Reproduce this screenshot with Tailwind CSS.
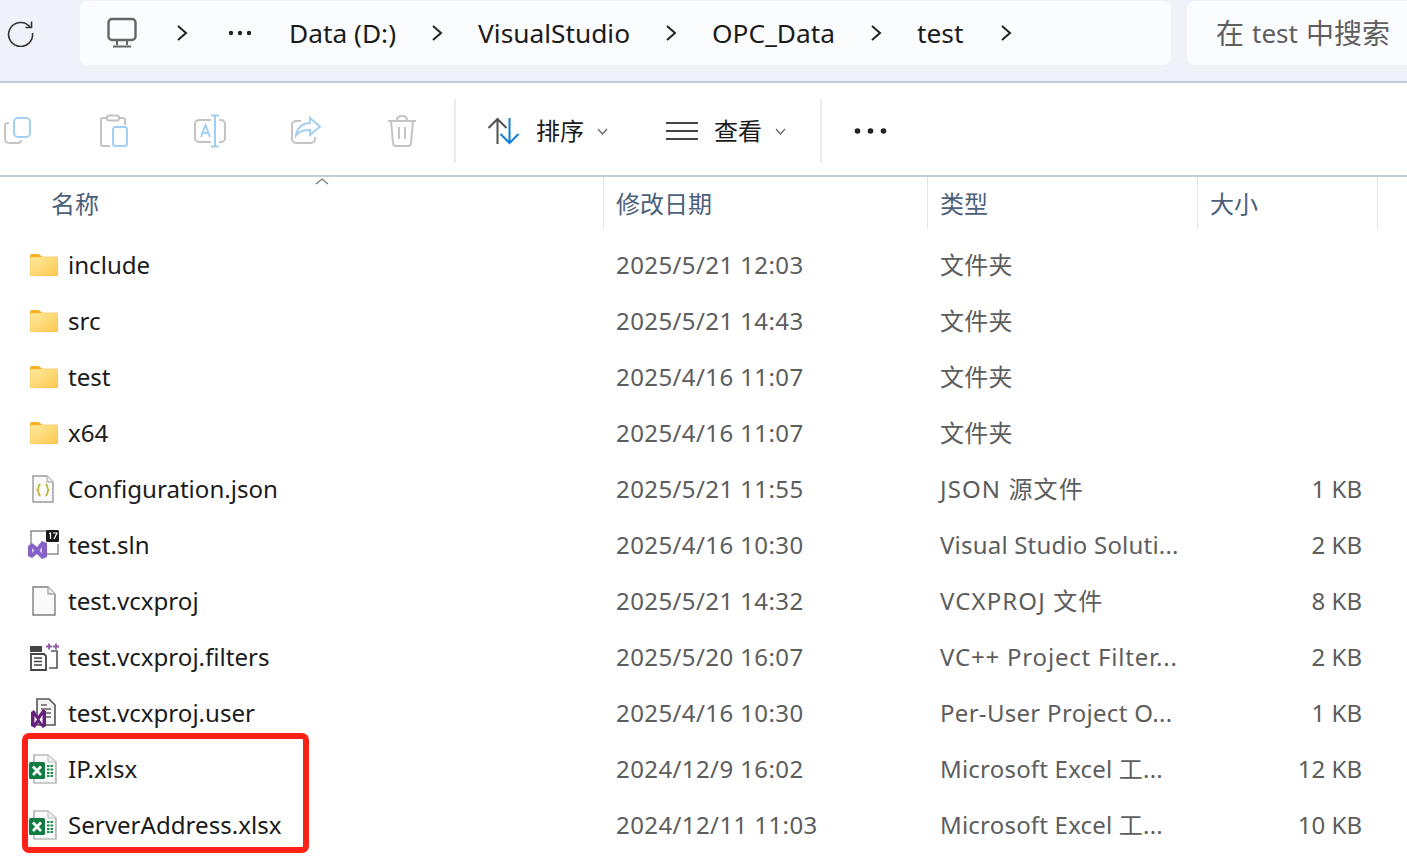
<!DOCTYPE html>
<html lang="zh-CN">
<head>
  <meta charset="UTF-8" />
  <meta name="viewport" content="width=device-width, initial-scale=1.0"/>
  <title>test</title>
  <script src="https://cdn.jsdelivr.net/npm/@tailwindcss/browser@4"></script>
</head>
<body class="bg-white overflow-hidden font-['Noto_Sans','Noto_Sans_CJK_SC',sans-serif] text-[24px] text-[#1b1b1b]">
<div class="relative w-[1407px] h-[867px] overflow-hidden">

  <!-- Address bar -->
  <div class="flex h-[83px] bg-[#eff3f9] border-b-2 border-[#c0cddb] pt-px text-[26.3px]">
    <div class="w-[80px] h-[64px] flex items-center pl-[7px] shrink-0">
      <svg width="28" height="28" viewBox="0 0 28 28" fill="none" stroke="#333" stroke-width="1.6"><path d="M23 8A12 12 0 1 0 25.500 14"/><path d="M24.500 2.500V8.500H18.500"/></svg>
    </div>
    <div class="w-[1091px] h-[64px] bg-[#fbfcfe] rounded-lg flex items-center pl-[27px] gap-[35px] shrink-0">
      <svg class="mr-[4px]" width="30" height="32" viewBox="0 0 30 32" fill="none" stroke="#666" stroke-width="2.400"><rect x="1.500" y="2" width="27" height="21" rx="3.500"/><path d="M10 24V28M20 24V28M6 29.500H24" stroke-width="2"/></svg>
      <svg class="mr-[5px]" width="12" height="18" viewBox="0 0 12 18" fill="none" stroke="#222" stroke-width="2"><path d="M2 2L10 9L2 16"/></svg>
      <svg class="mr-[2px]" width="24" height="6" viewBox="0 0 24 6" fill="#222"><circle cx="3" cy="3" r="2.200"/><circle cx="12" cy="3" r="2.200"/><circle cx="21" cy="3" r="2.200"/></svg>
      <span class="leading-none">Data (D:)</span>
      <svg width="12" height="18" viewBox="0 0 12 18" fill="none" stroke="#222" stroke-width="2"><path d="M2 2L10 9L2 16"/></svg>
      <span class="leading-none">VisualStudio</span>
      <svg width="12" height="18" viewBox="0 0 12 18" fill="none" stroke="#222" stroke-width="2"><path d="M2 2L10 9L2 16"/></svg>
      <span class="leading-none">OPC_Data</span>
      <svg width="12" height="18" viewBox="0 0 12 18" fill="none" stroke="#222" stroke-width="2"><path d="M2 2L10 9L2 16"/></svg>
      <span class="leading-none">test</span>
      <svg class="ml-[2px]" width="12" height="18" viewBox="0 0 12 18" fill="none" stroke="#222" stroke-width="2"><path d="M2 2L10 9L2 16"/></svg>
    </div>
    <div class="ml-4 w-[240px] h-[64px] bg-[#fbfcfe] rounded-l-lg flex items-center pl-[29px] text-[#5f5f5f] text-[28px] whitespace-nowrap shrink-0">在 <span class="text-[26px] mx-[8px]">test</span> 中搜索</div>
  </div>

  <!-- Command bar -->
  <div class="flex items-center h-[94px] border-b-2 border-[#c0cddb] pt-1">
    <div class="flex w-[454px] shrink-0 h-[64px] items-center">
      <div class="w-[36px] flex justify-center">
        <svg width="30" height="30" viewBox="0 0 30 30" fill="none" stroke-width="2"><path d="M6 7H5a3 3 0 0 0-3 3V23a4 4 0 0 0 4 4H15a3 3 0 0 0 3-3" stroke="#c4c4c4"/><rect x="11" y="2" width="16" height="19" rx="4" stroke="#a3cff3"/></svg>
      </div>
      <div class="w-[60px]"></div>
      <div class="w-[36px] flex justify-center">
        <svg width="30" height="34" viewBox="0 0 30 34" fill="none" stroke-width="2"><path d="M11 32H4a2 2 0 0 1-2-2V6a2 2 0 0 1 2-2H8M20 4H24a2 2 0 0 1 2 2V11" stroke="#c4c4c4"/><rect x="8" y="1.500" width="12" height="5" rx="2" stroke="#c4c4c4"/><rect x="14" y="13" width="14" height="19" rx="2.500" stroke="#a3cff3"/></svg>
      </div>
      <div class="w-[60px]"></div>
      <div class="w-[36px] flex justify-center">
        <svg width="34" height="34" viewBox="0 0 34 34" fill="none" stroke-width="2"><path d="M18 6H6a4 4 0 0 0-4 4V24a4 4 0 0 0 4 4H18M26 6H28a4 4 0 0 1 4 4V24a4 4 0 0 1-4 4H26" stroke="#c4c4c4"/><path d="M18 1.500H26M22 1.500V32.500M18 32.500H26M8 23L12.500 11L17 23M9.500 19H15.500" stroke="#a3cff3"/></svg>
      </div>
      <div class="w-[60px]"></div>
      <div class="w-[36px] flex justify-center">
        <svg width="32" height="30" viewBox="0 0 32 30" fill="none" stroke-width="2"><path d="M11 5H6a4 4 0 0 0-4 4V23a4 4 0 0 0 4 4H21a4 4 0 0 0 4-4V21" stroke="#c4c4c4"/><path d="M20 2L30 10.500L20 19V14C14 14 9 15 6 19.500C6.500 13 12 7 20 7Z" stroke="#a3cff3"/></svg>
      </div>
      <div class="w-[60px]"></div>
      <div class="w-[36px] flex justify-center">
        <svg width="30" height="32" viewBox="0 0 30 32" fill="none" stroke="#c4c4c4" stroke-width="2"><path d="M1 6H29M10 5C10 2 12 1 15 1S20 2 20 5M4 6L6 28a3 3 0 0 0 3 3H21a3 3 0 0 0 3-3L26 6M12 12V24M18 12V24"/></svg>
      </div>
    </div>
    <div class="w-[2px] h-[64px] bg-[#ebebeb] shrink-0"></div>
    <div class="flex items-center h-[64px] pl-[31px] shrink-0">
      <svg width="33" height="28" viewBox="0 0 33 28" fill="none" stroke-width="2"><path d="M10.500 27V2M1.500 11L10.500 2L19.500 11" stroke="#505050"/><path d="M22.500 1V26M13.500 17L22.500 26L31.500 17" stroke="#0f7fd6"/></svg>
      <span class="ml-[16px] leading-none">排序</span>
      <svg class="ml-[13px]" width="11" height="7" viewBox="0 0 11 7" fill="none" stroke="#666" stroke-width="1.200"><path d="M1 1L5.500 6L10 1"/></svg>
      <svg class="ml-[58px]" width="32" height="20" viewBox="0 0 32 20" fill="none" stroke="#444" stroke-width="2"><path d="M0 2H32M0 10H32M0 18H32"/></svg>
      <span class="ml-[16px] leading-none">查看</span>
      <svg class="ml-[13px]" width="11" height="7" viewBox="0 0 11 7" fill="none" stroke="#666" stroke-width="1.200"><path d="M1 1L5.500 6L10 1"/></svg>
    </div>
    <div class="ml-[34px] w-[2px] h-[64px] bg-[#ebebeb] shrink-0"></div>
    <svg class="ml-[32px]" width="33" height="6" viewBox="0 0 33 6" fill="#222"><circle cx="3.500" cy="3" r="2.800"/><circle cx="16.500" cy="3" r="2.800"/><circle cx="29.500" cy="3" r="2.800"/></svg>
  </div>

  <!-- Column headers -->
  <div class="relative flex h-[52px] text-[#4c607a]">
    <div class="w-[604px] pl-[51px] pt-[9px] border-r border-[#e3e3e3]">名称</div>
    <div class="w-[324px] pl-[12px] pt-[9px] border-r border-[#e3e3e3]">修改日期</div>
    <div class="w-[270px] pl-[12px] pt-[9px] border-r border-[#e3e3e3]">类型</div>
    <div class="w-[180px] pl-[12px] pt-[9px] border-r border-[#e3e3e3]">大小</div>
    <svg class="absolute left-[315px] top-[1px]" width="14" height="7" viewBox="0 0 14 7" fill="none" stroke="#777" stroke-width="1.200"><path d="M1 6L7 1L13 6"/></svg>
  </div>

  <!-- File list -->
  <div id="fileList" class="pt-[8px]"></div>

  <!-- Annotation -->
  <div class="absolute left-[22px] top-[733px] w-[287px] h-[120px] border-[6px] border-[#ff2018] rounded-[7px]"></div>
</div>

<script>
  const folderIcon = `<svg class="ml-[2px]" width="28" height="22" viewBox="0 0 28 22"><defs><linearGradient id="fg" x1="0" y1="0" x2="1" y2="1"><stop offset="0" stop-color="#ffe9a0"/><stop offset="1" stop-color="#fcc94f"/></linearGradient></defs><path d="M0 2a2 2 0 0 1 2-2H9l3 3V5H0Z" fill="#f5b021"/><rect y="3" width="28" height="19" rx="1" fill="url(#fg)" stroke="#f5bd3d" stroke-width=".6"/></svg>`;
  const jsonIcon = `<svg class="ml-[4px]" width="22" height="28" viewBox="0 0 22 28" fill="#fafafa" stroke="#9a9a9a" stroke-width="1.400"><path d="M1 1H15L21 7V27H1Z"/><path d="M15 1V7H21" fill="#eee" stroke="#bbb"/><path d="M8.500 9.500C5.500 9.500 7.500 13.500 5.500 15C7.500 16.500 5.500 20.500 8.500 20.500M13.500 9.500C16.500 9.500 14.500 13.500 16.500 15C14.500 16.500 16.500 20.500 13.500 20.500" fill="none" stroke="#bdb83a" stroke-width="1.800"/></svg>`;
  const slnIcon = `<svg width="32" height="30" viewBox="0 0 32 30"><path d="M3 14V1H19M30 14V24H18" fill="none" stroke="#8a8a8a" stroke-width="1.400"/><rect x="18" y="0" width="13" height="12" rx="1.500" fill="#1a1a1a"/><path d="M21 3.500L22.500 3V9M25 3H29L26 9" fill="none" stroke="#fff" stroke-width="1.200"/><path d="M0 16L4 13L9 17L14 11L19 13V27L14 29L9 24L4 28L0 26Z" fill="#8661c5"/><path d="M4 18V23L6.500 20.500ZM14 17L11.500 20.500L14 24Z" fill="#d9cdef"/></svg>`;
  const blankIcon = `<svg class="ml-[4px]" width="24" height="30" viewBox="0 0 24 30" fill="#fafafa" stroke="#808080" stroke-width="1.400"><path d="M1 1H16L23 8V29H1Z"/><path d="M16 1V8H23" fill="#eee" stroke="#aaa"/></svg>`;
  const filtersIcon = `<svg class="ml-[1px]" width="30" height="28" viewBox="0 0 30 28"><rect x="1" y="3" width="12" height="6" fill="#444"/><path d="M22 8H28V25H20" fill="none" stroke="#555" stroke-width="1.600"/><path d="M17 3.500H23M20 .5V6.500M24 3.500H30M27 .5V6.500" stroke="#8f5ba8" stroke-width="1.800"/><path d="M2 11H15L17 13V27H2Z" fill="#fff" stroke="#444" stroke-width="1.800"/><path d="M5 15H13M5 18.500H13M5 22H13" stroke="#444" stroke-width="1.500"/></svg>`;
  const userIcon = `<svg class="ml-[2px]" width="28" height="30" viewBox="0 0 28 30"><path d="M7 1H19L25 7V27H7Z" fill="#f4f4f4" stroke="#555" stroke-width="1.600"/><path d="M11 7H17M11 11H21M11 15H21M15 19H21" stroke="#666" stroke-width="1.400"/><path d="M1 14V28L5 30L8 25L13 30L16 28V13L13 11L8 18L4 12Z" fill="#68217a"/><path d="M4.500 18V25L7 21.500ZM12.500 17L9.500 21.500L12.500 26Z" fill="#fff"/></svg>`;
  const excelIcon = `<svg class="ml-[1px]" width="28" height="30" viewBox="0 0 28 30"><path d="M5 1H19L27 8V29H5Z" fill="#fafafa" stroke="#999" stroke-width="1.200"/><path d="M19 1V8H27" fill="#eee" stroke="#bbb"/><path d="M18 12H24M18 15.500H24M18 19H24M18 22H24" stroke="#1d8a52" stroke-width="2" stroke-dasharray="2.500 1"/><rect y="8" width="16" height="17" rx="1.500" fill="#107c41"/><path d="M4 12.500L12 21M12 12.500L4 21" stroke="#fff" stroke-width="2.600"/></svg>`;

  const files = [
    { name: 'include', date: '2025/5/21 12:03', type: '文件夹', size: '', icon: folderIcon, typeClass: 'tracking-[.2px]' },
    { name: 'src', date: '2025/5/21 14:43', type: '文件夹', size: '', icon: folderIcon, typeClass: 'tracking-[.2px]' },
    { name: 'test', date: '2025/4/16 11:07', type: '文件夹', size: '', icon: folderIcon, typeClass: 'tracking-[.2px]' },
    { name: 'x64', date: '2025/4/16 11:07', type: '文件夹', size: '', icon: folderIcon, typeClass: 'tracking-[.2px]' },
    { name: 'Configuration.json', date: '2025/5/21 11:55', type: 'JSON 源文件', size: '1 KB', icon: jsonIcon, typeClass: 'tracking-[1.1px]' },
    { name: 'test.sln', date: '2025/4/16 10:30', type: 'Visual Studio Soluti...', size: '2 KB', icon: slnIcon, typeClass: 'tracking-[.2px]' },
    { name: 'test.vcxproj', date: '2025/5/21 14:32', type: 'VCXPROJ 文件', size: '8 KB', icon: blankIcon, typeClass: 'tracking-[1.1px]' },
    { name: 'test.vcxproj.filters', date: '2025/5/20 16:07', type: 'VC++ Project Filter...', size: '2 KB', icon: filtersIcon, typeClass: 'tracking-[.8px]' },
    { name: 'test.vcxproj.user', date: '2025/4/16 10:30', type: 'Per-User Project O...', size: '1 KB', icon: userIcon, typeClass: 'tracking-[.3px]' },
    { name: 'IP.xlsx', date: '2024/12/9 16:02', type: 'Microsoft Excel 工...', size: '12 KB', icon: excelIcon, typeClass: 'tracking-[.2px]' },
    { name: 'ServerAddress.xlsx', date: '2024/12/11 11:03', type: 'Microsoft Excel 工...', size: '10 KB', icon: excelIcon, typeClass: 'tracking-[.2px]' },
  ];

  const list = document.getElementById('fileList');
  files.forEach(file => {
    const row = document.createElement('div');
    row.className = 'flex items-center h-[56px] whitespace-nowrap';
    row.innerHTML = `
      <div class="w-[616px] pl-[28px] flex items-center">
        <div class="w-[40px] flex">${file.icon}</div>
        <span class="text-[24.1px]">${file.name}</span>
      </div>
      <div class="w-[324px] text-[#5d5d5d] tracking-[.4px]">${file.date}</div>
      <div class="w-[270px] text-[#5d5d5d] ${file.typeClass}">${file.type}</div>
      <div class="w-[152px] text-right text-[#5d5d5d]">${file.size}</div>
    `;
    list.appendChild(row);
  });
</script>
</body>
</html>
